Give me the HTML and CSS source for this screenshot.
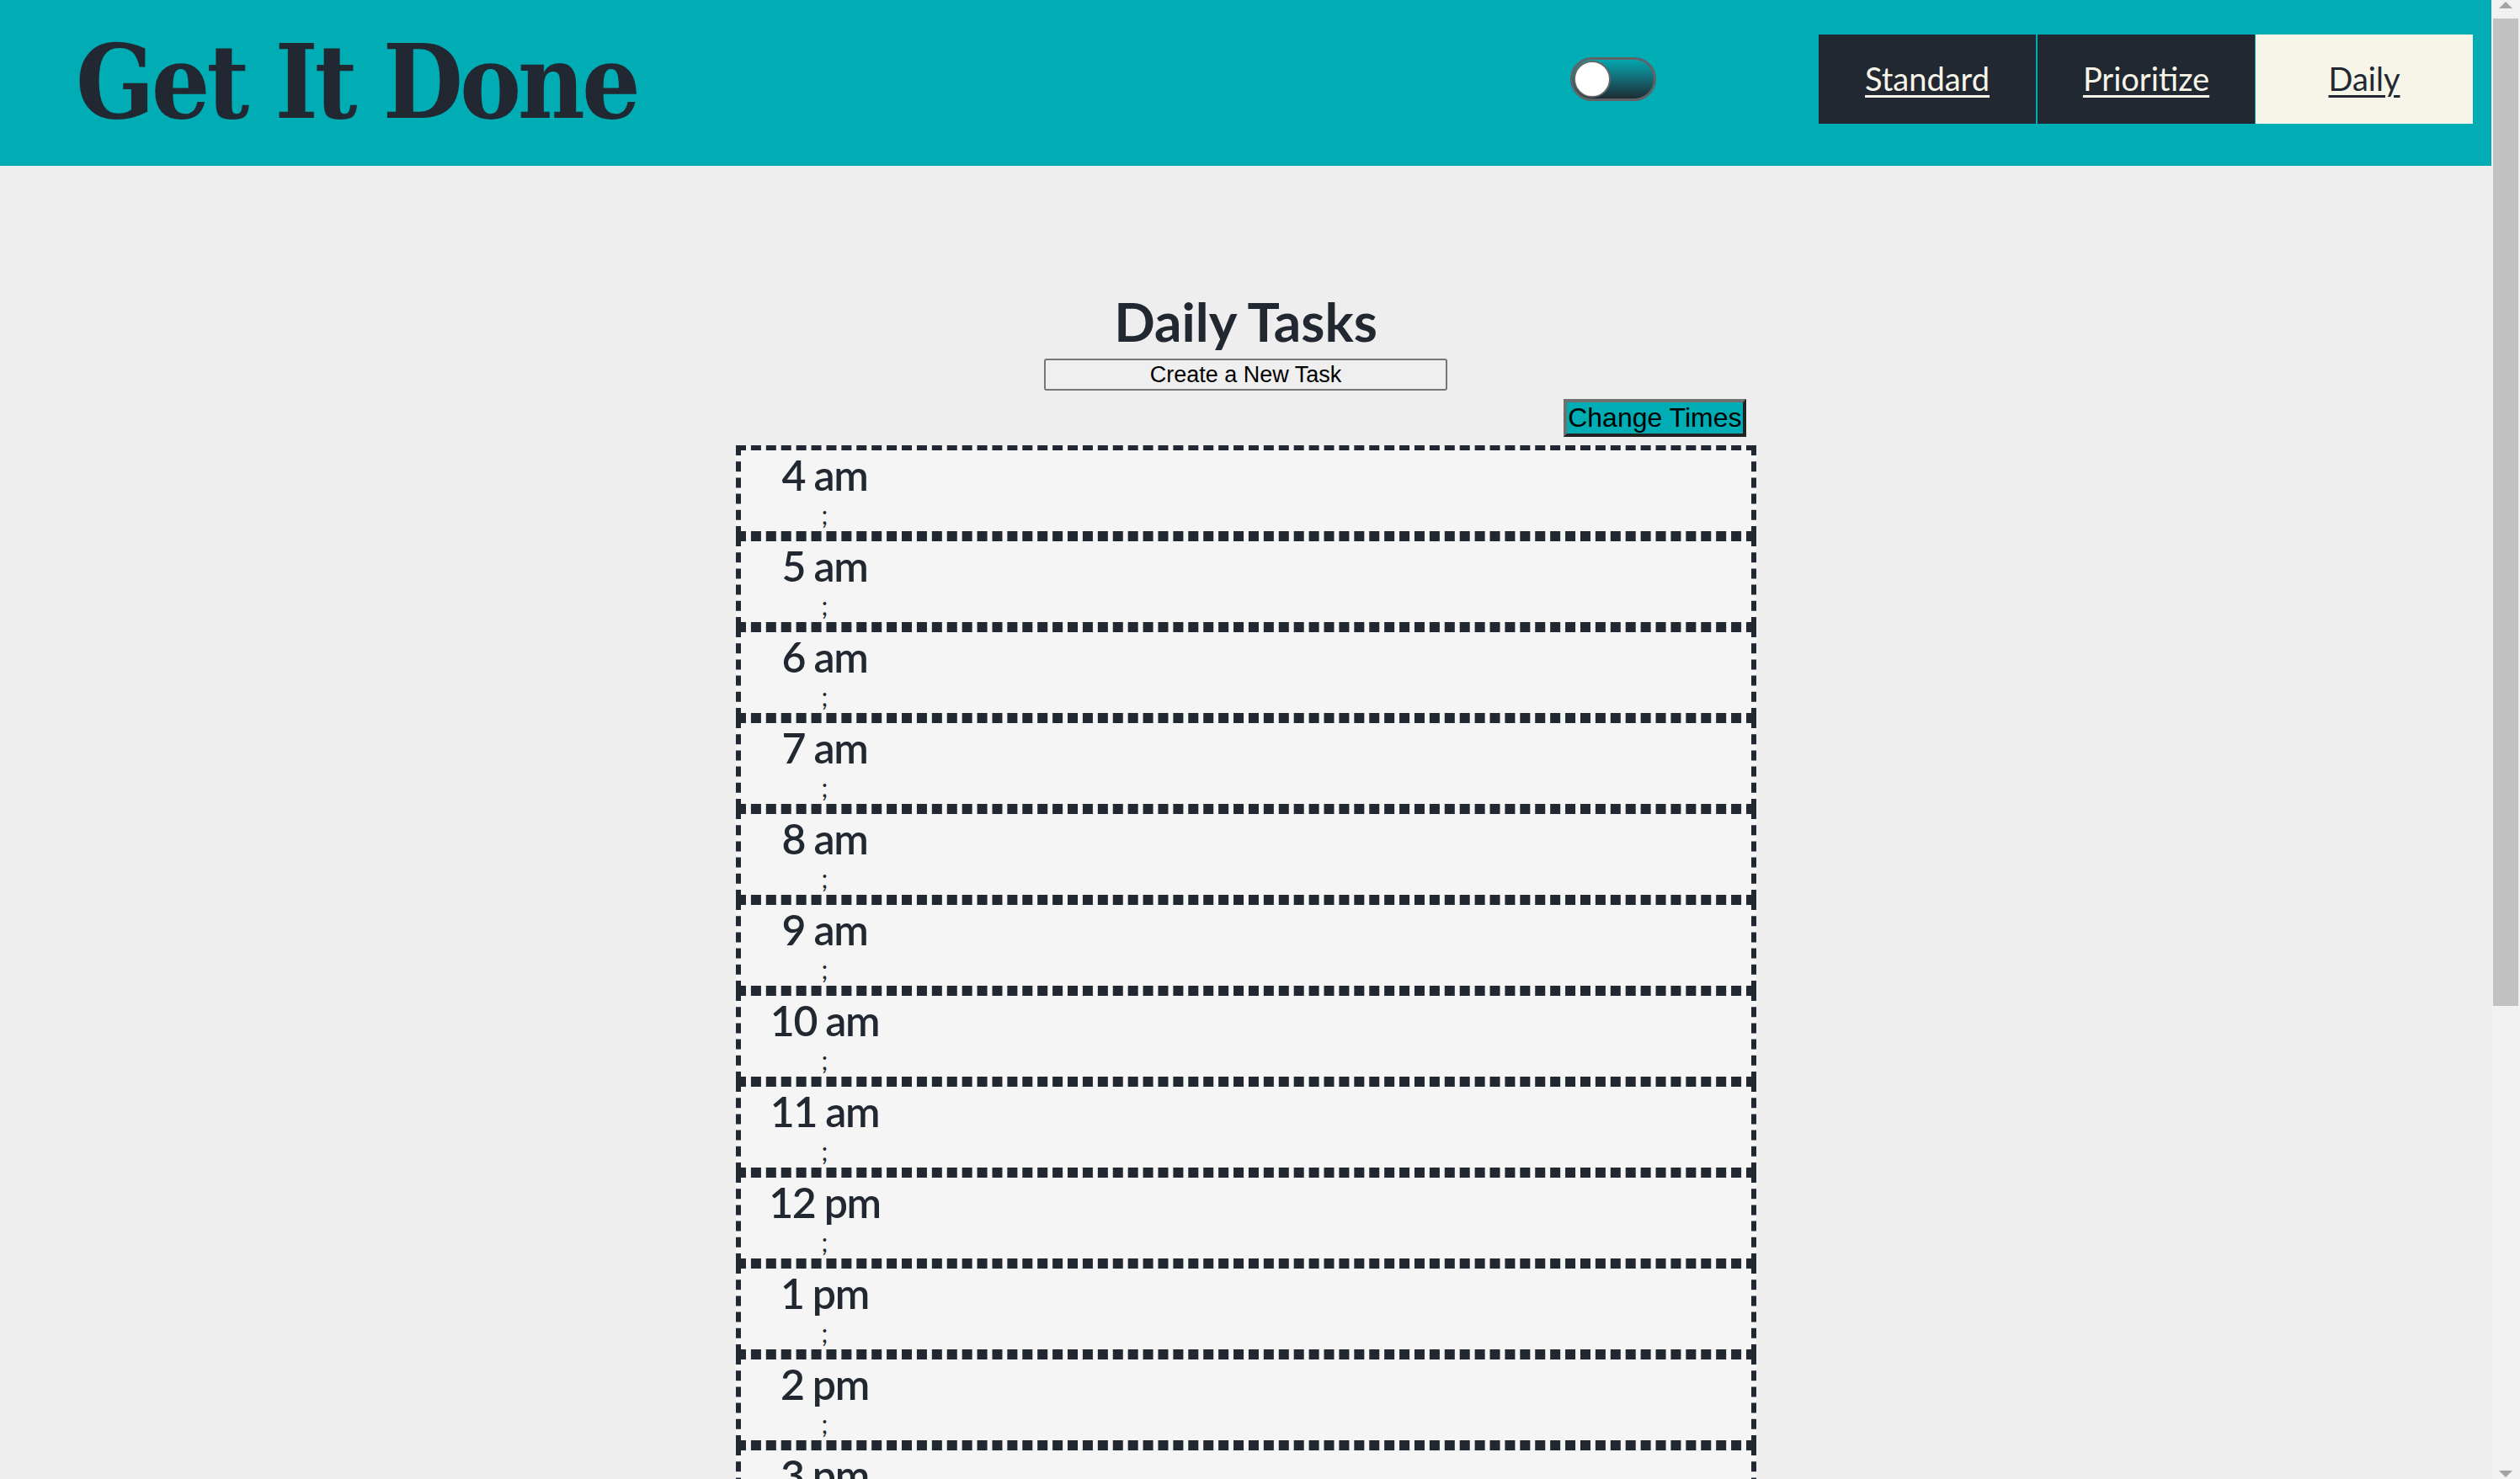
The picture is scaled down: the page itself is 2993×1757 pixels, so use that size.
FILE: index.html
```html
<!DOCTYPE html>
<html lang="en">
<head>
<meta charset="utf-8">
<title>Get It Done</title>
<link rel="stylesheet" href="styles.css">
</head>
<body>
<div class="app">
  <header class="topbar">
    <h1 class="brand">Get It Done</h1>
    <label class="toggle"><span class="knob"></span></label>
    <nav class="nav">
      <a class="nav-item" href="#">Standard</a>
      <a class="nav-item" href="#">Prioritize</a>
      <a class="nav-item active" href="#">Daily</a>
    </nav>
  </header>
  <main class="page">
    <h2 class="page-title">Daily Tasks</h2>
    <button class="create-btn">Create a New Task</button>
    <div class="times-bar"><button class="change-btn">Change Times</button></div>
    <section class="schedule">
      <div class="slot"><div class="slot-label"><div class="time">4 am</div><div class="semi">;</div></div></div>
      <div class="slot"><div class="slot-label"><div class="time">5 am</div><div class="semi">;</div></div></div>
      <div class="slot"><div class="slot-label"><div class="time">6 am</div><div class="semi">;</div></div></div>
      <div class="slot"><div class="slot-label"><div class="time">7 am</div><div class="semi">;</div></div></div>
      <div class="slot"><div class="slot-label"><div class="time">8 am</div><div class="semi">;</div></div></div>
      <div class="slot"><div class="slot-label"><div class="time">9 am</div><div class="semi">;</div></div></div>
      <div class="slot"><div class="slot-label"><div class="time">10 am</div><div class="semi">;</div></div></div>
      <div class="slot"><div class="slot-label"><div class="time">11 am</div><div class="semi">;</div></div></div>
      <div class="slot"><div class="slot-label"><div class="time">12 pm</div><div class="semi">;</div></div></div>
      <div class="slot"><div class="slot-label"><div class="time">1 pm</div><div class="semi">;</div></div></div>
      <div class="slot"><div class="slot-label"><div class="time">2 pm</div><div class="semi">;</div></div></div>
      <div class="slot"><div class="slot-label"><div class="time">3 pm</div><div class="semi">;</div></div></div>
      <div class="slot"><div class="slot-label"><div class="time">4 pm</div><div class="semi">;</div></div></div>
      <div class="slot"><div class="slot-label"><div class="time">5 pm</div><div class="semi">;</div></div></div>
      <div class="slot"><div class="slot-label"><div class="time">6 pm</div><div class="semi">;</div></div></div>
      <div class="slot"><div class="slot-label"><div class="time">7 pm</div><div class="semi">;</div></div></div>
      <div class="slot"><div class="slot-label"><div class="time">8 pm</div><div class="semi">;</div></div></div>
      <div class="slot"><div class="slot-label"><div class="time">9 pm</div><div class="semi">;</div></div></div>
    </section>
  </main>
</div>
<div class="scrollbar">
  <div class="sb-btn"><svg width="34" height="21" viewBox="0 0 34 21"><polygon points="9,10 17,2 25,10" fill="#a3a3a3"/></svg></div>
  <div class="sb-track"><div class="sb-thumb"></div></div>
  <div class="sb-btn"><svg width="34" height="21" viewBox="0 0 34 21"><polygon points="9,11 17,19 25,11" fill="#a3a3a3"/></svg></div>
</div>
</body>
</html>
```

FILE: styles.css
```css
html {
  background: #eeeeee;
}

body {
  margin: 0;
  background: #eeeeee;
  color: #222831;
  font-family: Lato, "Noto Sans", sans-serif;
}

.app {
  margin-right: 34px;
}

/* ---------- fake window scrollbar ---------- */
.scrollbar {
  position: fixed;
  top: 0;
  right: 0;
  width: 34px;
  height: 100vh;
  background: #f1f1f1;
  display: flex;
  flex-direction: column;
}

.sb-btn {
  height: 21px;
  flex: none;
}

.sb-btn svg {
  display: block;
}

.sb-track {
  flex: 1;
  padding: 1px 2px;
}

.sb-thumb {
  height: 1173px;
  background: #c1c1c1;
}

/* ---------- header ---------- */
.topbar {
  display: flex;
  align-items: center;
  height: 197px;
  background: #00adb5;
  padding: 0 22px 0 90px;
  box-sizing: border-box;
}

.brand {
  flex: 1;
  margin: 0;
  font-family: "DejaVu Serif", "Liberation Serif", serif;
  font-stretch: condensed;
  font-weight: 900;
  font-size: 122px;
  line-height: 1;
  color: #222831;
  letter-spacing: -4px;
  padding-bottom: 4px;
}

.toggle {
  display: flex;
  align-items: center;
  width: 102px;
  height: 52px;
  box-sizing: border-box;
  border: 3px solid #5f6366;
  border-radius: 26px;
  background: linear-gradient(180deg, #05a6ae 0%, #12707a 45%, #1e2b33 100%);
  margin-right: 193px;
  margin-bottom: 9px;
  padding-left: 1px;
}

.knob {
  width: 44px;
  height: 44px;
  box-sizing: border-box;
  border-radius: 50%;
  background: #ffffff;
  border: 2px solid #676767;
}

.nav {
  display: flex;
  align-items: stretch;
  height: 106px;
  margin-bottom: 10px;
}

.nav-item {
  display: flex;
  align-items: center;
  justify-content: center;
  width: 258px;
  background: #222831;
  color: #f7f5e8;
  font-family: Lato, sans-serif;
  font-size: 38px;
  text-decoration: underline;
  text-decoration-thickness: 3px;
  text-underline-offset: 5px;
  padding-bottom: 2px;
  box-sizing: border-box;
}

.nav-item + .nav-item {
  margin-left: 2px;
}

.nav-item.active {
  margin-left: 1px;
  background: #f7f5e8;
  color: #222831;
}

/* ---------- main ---------- */
.page {
  display: flex;
  flex-direction: column;
  align-items: center;
  padding: 145px 0 87px;
}

.page-title {
  margin: 0;
  font-family: Lato, sans-serif;
  font-weight: 700;
  font-size: 64px;
  line-height: 80px;
  color: #222831;
}

.create-btn {
  margin-top: 4px;
  width: 479px;
  height: 38px;
  box-sizing: border-box;
  border: 2px solid #767676;
  border-radius: 3px;
  background: #efefef;
  font-family: "Liberation Sans", Arial, sans-serif;
  font-size: 27px;
  line-height: 30px;
  color: #000;
  padding: 0;
}

.times-bar {
  width: 1212px;
  margin-top: 10px;
  display: flex;
  justify-content: flex-end;
  padding-right: 12px;
  box-sizing: border-box;
}

.change-btn {
  height: 45px;
  box-sizing: border-box;
  padding: 0 1px;
  border-style: solid;
  border-width: 4px;
  border-color: #707070 #222222 #222222 #707070;
  background: #00adb5;
  color: #000;
  font-family: "Liberation Sans", Arial, sans-serif;
  font-size: 32px;
  line-height: 35px;
}

.schedule {
  width: 1212px;
  margin-top: 10px;
  display: flex;
  flex-direction: column;
}

.slot {
  height: 108px;
  box-sizing: border-box;
  border: 6px dashed #222831;
  background: #f5f5f5;
  display: flex;
}

.slot-label {
  width: 200px;
  text-align: center;
}

.time {
  font-family: Lato, sans-serif;
  font-weight: 600;
  font-size: 50px;
  line-height: 57px;
  letter-spacing: -1.3px;
  word-spacing: -1px;
  color: #222831;
  margin-top: 1px;
}

.semi {
  font-family: Lato, sans-serif;
  font-size: 30px;
  line-height: 36px;
  color: #222831;
  margin-top: 0;
}
```
